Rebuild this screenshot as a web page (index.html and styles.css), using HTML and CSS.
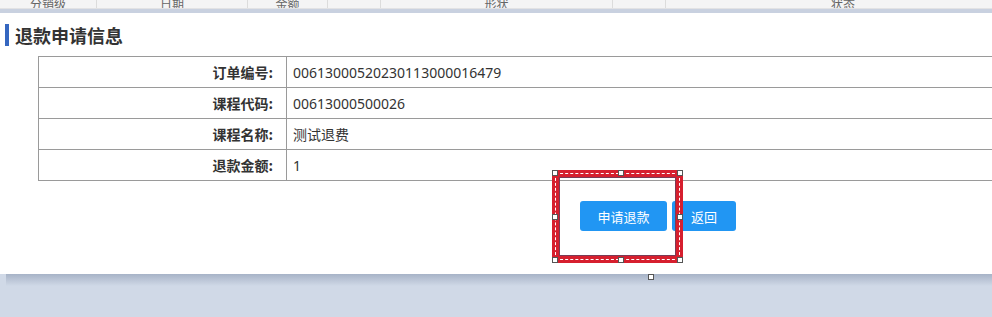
FILE: index.html
```html
<!DOCTYPE html>
<html lang="zh-CN">
<head>
<meta charset="utf-8">
<title>退款申请信息</title>
<link rel="stylesheet" href="styles.css">
</head>
<body>
<div class="page">
  <div class="topbar">
    <div class="tcell c1"><span>分销级</span></div>
    <div class="tcell c2"><span>日期</span></div>
    <div class="tcell c3"><span>金额</span></div>
    <div class="tcell c4"><span></span></div>
    <div class="tcell c5"><span>形状</span></div>
    <div class="tcell c6"><span></span></div>
    <div class="tcell c7"><span>状态</span></div>
  </div>
  <div class="strip"></div>
  <div class="panel">
    <h2 class="title">退款申请信息</h2>
    <table class="info">
      <tr><th>订单编号:</th><td>00613000520230113000016479</td></tr>
      <tr><th>课程代码:</th><td>00613000500026</td></tr>
      <tr><th>课程名称:</th><td>测试退费</td></tr>
      <tr><th>退款金额:</th><td>1</td></tr>
    </table>
    <div class="actions">
      <button class="btn btn-wide">申请退款</button>
      <button class="btn">返回</button>
    </div>
    <div class="mark">
      <div class="dash"></div>
      <span class="h h-tl"></span><span class="h h-tm"></span><span class="h h-tr"></span>
      <span class="h h-ml"></span><span class="h h-mr"></span>
      <span class="h h-bl"></span><span class="h h-bm"></span><span class="h h-br"></span>
    </div>
    <span class="h h-rot"></span>
  </div>
  <div class="shade"></div>
</div>
</body>
</html>
```
FILE: styles.css
```css
html, body {
  margin: 0;
  padding: 0;
}
body {
  background: #d0d9e7;
  font-family: "Noto Sans", "Noto Sans CJK SC", sans-serif;
  color: #333;
  overflow: hidden;
}
.page {
  width: 992px;
  height: 317px;
  overflow: hidden;
}
.topbar {
  display: flex;
  height: 8px;
  background: #f4f4f5;
  border-bottom: 1px solid #e2e2e4;
}
.tcell {
  height: 8px;
  overflow: hidden;
  border-right: 1px solid #dcdcdc;
  display: flex;
  align-items: flex-end;
  justify-content: center;
  font-size: 12px;
  color: #666;
}
.tcell span {
  display: block;
  line-height: 12px;
  margin-bottom: -3px;
}
.c1 { width: 96px; }
.c2 { width: 150px; }
.c3 { width: 79px; }
.c4 { width: 52px; }
.c5 { width: 231px; }
.c6 { width: 52px; }
.c7 { flex: 1; border-right: none; padding-left: 28px; }
.strip {
  height: 4px;
  background: #c9d1e0;
}
.panel {
  position: relative;
  background: #fff;
  height: 261px;
  padding-top: 11px;
  box-sizing: border-box;
}
.title {
  margin: 0 0 11px 5px;
  border-left: 4px solid #3567c0;
  padding-left: 6px;
  height: 22px;
  line-height: 22px;
  font-size: 18px;
  font-weight: bold;
  color: #333;
  font-family: "Noto Sans CJK SC", sans-serif;
}
.info {
  margin-top: -1px;
  margin-left: 38px;
  width: 980px;
  border-collapse: collapse;
  font-size: 14px;
}
.info th, .info td {
  border: 1px solid #9a9a9a;
  height: 31px;
  padding: 0;
  box-sizing: border-box;
}
.info th {
  width: 248px;
  text-align: right;
  padding-right: 13px;
  font-weight: bold;
  font-family: "Noto Sans CJK SC", sans-serif;
  color: #333;
}
.info td {
  text-align: left;
  padding-left: 6px;
  color: #333;
}
.actions {
  display: flex;
  gap: 5px;
  margin: 20px 0 0 580px;
}
.btn {
  height: 30px;
  border: none;
  border-radius: 3px;
  background: #2196f3;
  color: #fff;
  font-size: 13px;
  font-family: "Noto Sans CJK SC", sans-serif;
  padding: 0;
  width: 64px;
}
.btn-wide {
  width: 87px;
}
.mark {
  position: absolute;
  left: 552px;
  top: 157px;
  width: 131px;
  height: 93px;
  box-sizing: border-box;
  border: 7px solid #d61f2e;
  box-shadow: inset 0 0 0 1px #7a3b55;
}
.dash {
  position: absolute;
  left: -4px;
  top: -4px;
  right: -4px;
  bottom: -4px;
  border: 1px dashed #fff;
}
.h {
  position: absolute;
  width: 4px;
  height: 4px;
  background: #fff;
  border: 1px solid #555;
}
.h-tl { left: -7px; top: -7px; }
.h-tm { left: 59px; top: -7px; }
.h-tr { right: -7px; top: -7px; }
.h-ml { left: -7px; top: 37px; }
.h-mr { right: -7px; top: 37px; }
.h-bl { left: -7px; bottom: -7px; }
.h-bm { left: 59px; bottom: -7px; }
.h-br { right: -7px; bottom: -7px; }
.h-rot { left: 648px; top: 261px; }
.shade {
  height: 12px;
  margin-left: 6px;
  background: linear-gradient(#a7b3c7, #d0d9e7);
}
```
